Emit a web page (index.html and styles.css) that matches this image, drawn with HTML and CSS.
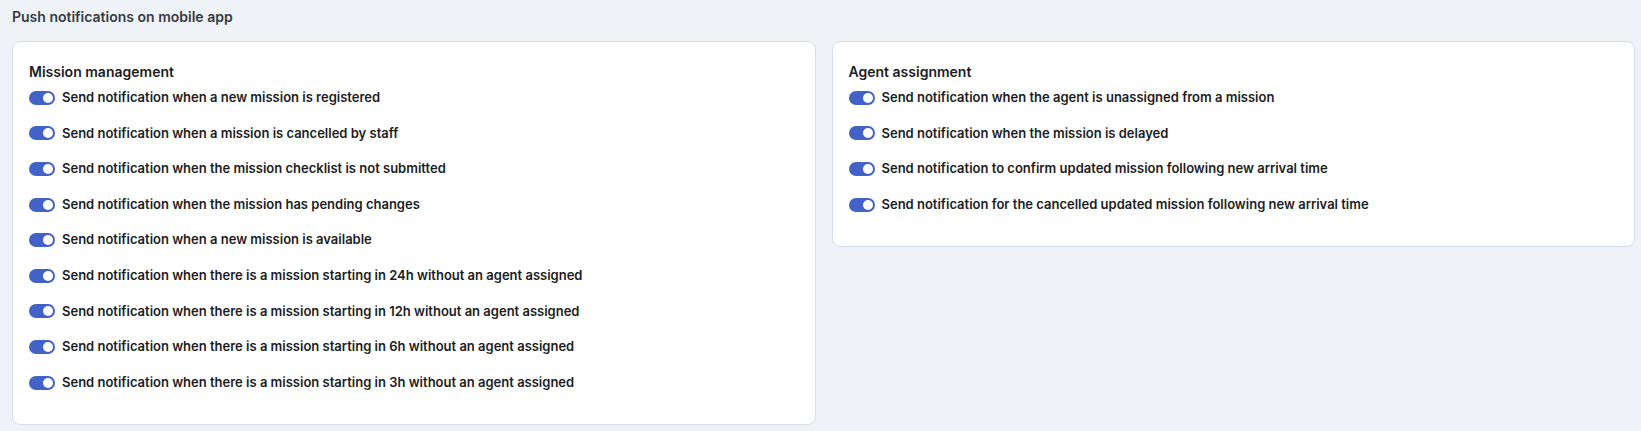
FILE: index.html
```html
<!DOCTYPE html>
<html lang="en">
<head>
    <meta charset="UTF-8">
    <meta name="viewport" content="width=device-width, initial-scale=1.0">
    <title>Push notifications</title>
    <link rel="stylesheet" href="styles.css">
</head>
<body>
    <div class="settings">
        <h2 class="section-title">Push notifications on mobile app</h2>
        <div class="cards">
            <div class="card">
                <h3>Mission management</h3>
                <ul class="toggle-list">
                    <li class="toggle-item"><span class="switch on"></span><span>Send notification when a new mission is registered</span></li>
                    <li class="toggle-item"><span class="switch on"></span><span>Send notification when a mission is cancelled by staff</span></li>
                    <li class="toggle-item"><span class="switch on"></span><span>Send notification when the mission checklist is not submitted</span></li>
                    <li class="toggle-item"><span class="switch on"></span><span>Send notification when the mission has pending changes</span></li>
                    <li class="toggle-item"><span class="switch on"></span><span>Send notification when a new mission is available</span></li>
                    <li class="toggle-item"><span class="switch on"></span><span>Send notification when there is a mission starting in 24h without an agent assigned</span></li>
                    <li class="toggle-item"><span class="switch on"></span><span>Send notification when there is a mission starting in 12h without an agent assigned</span></li>
                    <li class="toggle-item"><span class="switch on"></span><span>Send notification when there is a mission starting in 6h without an agent assigned</span></li>
                    <li class="toggle-item"><span class="switch on"></span><span>Send notification when there is a mission starting in 3h without an agent assigned</span></li>
                </ul>
            </div>
            <div class="card">
                <h3>Agent assignment</h3>
                <ul class="toggle-list">
                    <li class="toggle-item"><span class="switch on"></span><span>Send notification when the agent is unassigned from a mission</span></li>
                    <li class="toggle-item"><span class="switch on"></span><span>Send notification when the mission is delayed</span></li>
                    <li class="toggle-item"><span class="switch on"></span><span>Send notification to confirm updated mission following new arrival time</span></li>
                    <li class="toggle-item"><span class="switch on"></span><span>Send notification for the cancelled updated mission following new arrival time</span></li>
                </ul>
            </div>
        </div>
    </div>
</body>
</html>
```

FILE: styles.css
```css
body {
    font-family: Inter, "Noto Sans", sans-serif;
    margin: 0;
    padding: 0;
    background-color: #eff3f8;
    color: #1b1d22;
}
.settings {
    padding: 8px 6px 8px 12px;
}
.section-title {
    margin: 0 0 16px;
    font-size: 14px;
    font-weight: 600;
    line-height: 17px;
    color: #353a44;
}
.cards {
    display: grid;
    grid-template-columns: 1fr 1fr;
    gap: 16px;
    align-items: start;
}
.card {
    background-color: #ffffff;
    border: 1px solid #d7dde8;
    border-radius: 8px;
    padding: 20px 16px 16px;
}
.card h3 {
    margin: 0 0 6px;
    font-size: 14px;
    font-weight: 600;
    line-height: 20px;
}
.toggle-list {
    list-style-type: none;
    margin: 0;
    padding: 0;
}
.toggle-item {
    display: flex;
    align-items: center;
    gap: 7px;
    font-size: 13px;
    font-weight: 600;
    line-height: 19.6px;
    margin-bottom: 16px;
}
.switch {
    position: relative;
    flex: none;
    width: 26px;
    height: 14px;
    border-radius: 7px;
    background-color: #cfd5df;
}
.switch.on {
    background-color: #4262c8;
}
.switch::after {
    content: "";
    position: absolute;
    top: 2px;
    left: 2px;
    width: 10px;
    height: 10px;
    border-radius: 50%;
    background-color: #ffffff;
}
.switch.on::after {
    left: 14px;
}
```
